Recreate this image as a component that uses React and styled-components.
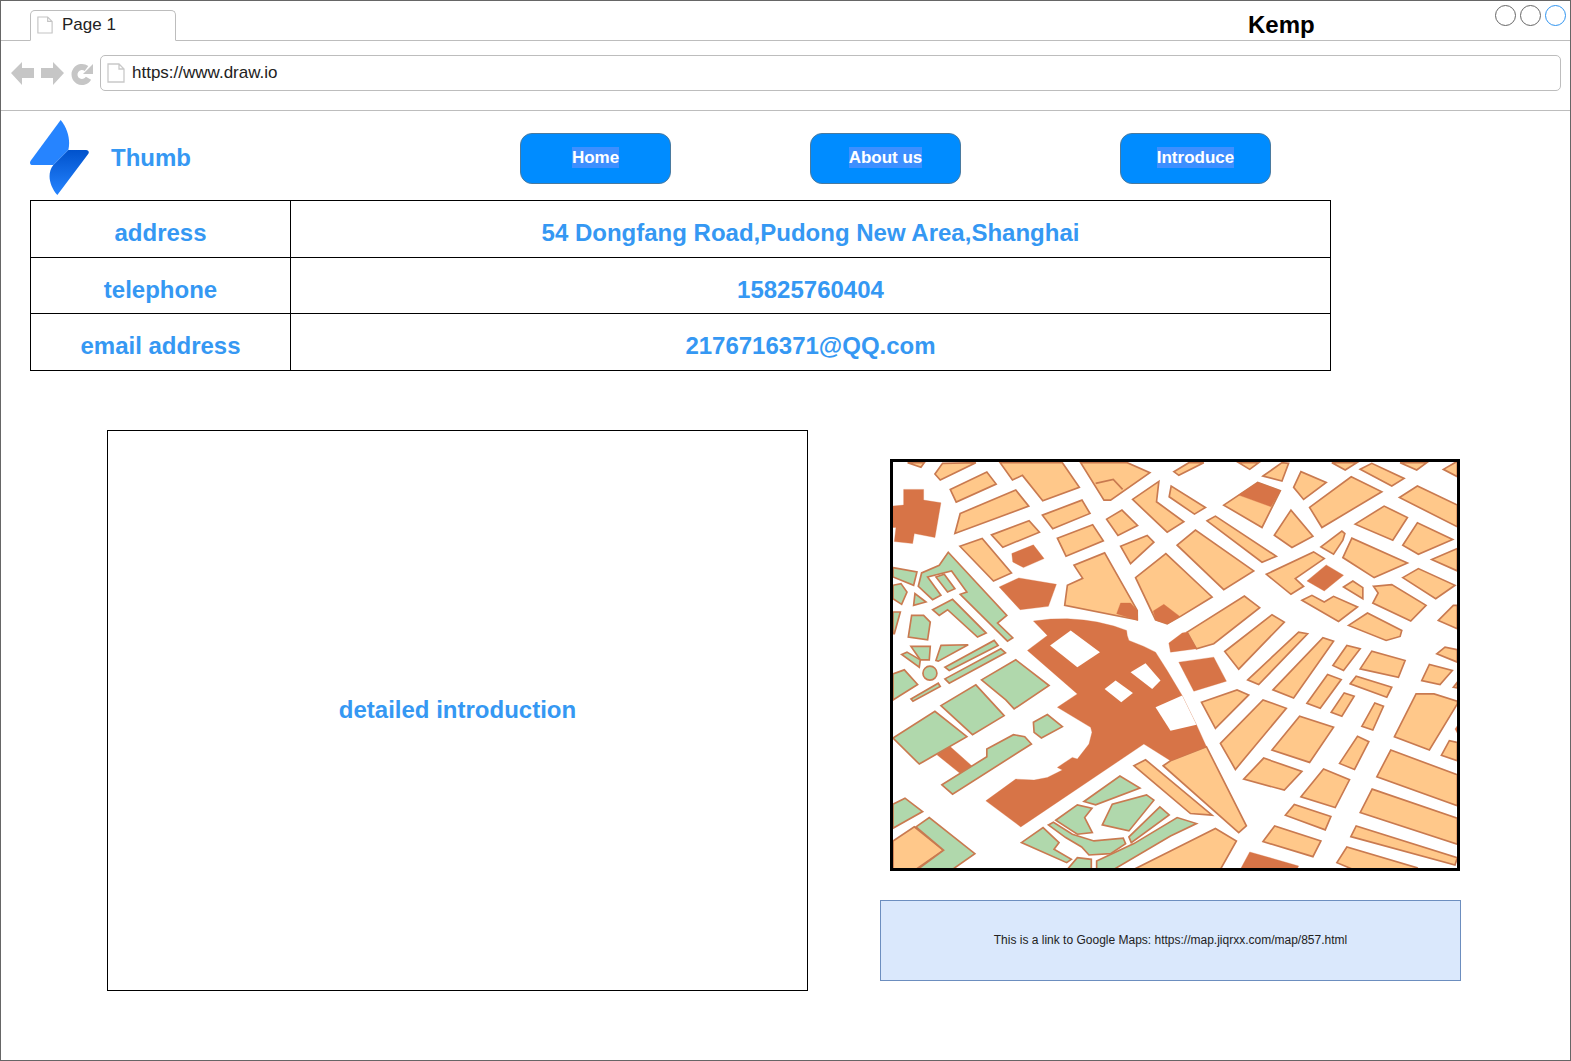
import React from 'react';
import styled, { createGlobalStyle } from 'styled-components';

const GlobalStyle = createGlobalStyle`
  html, body {
    margin: 0;
    padding: 0;
    background: #fff;
    font-family: "Liberation Sans", Arial, sans-serif;
  }
`;

const Window = styled.div`
  box-sizing: border-box;
  width: 1571px;
  height: 1061px;
  border: 1px solid #666;
  overflow: hidden;
  background: #fff;
`;

const TabStrip = styled.div`
  display: flex;
  align-items: flex-end;
  height: 40px;
  box-sizing: border-box;
  border-bottom: 1px solid #bdbdbd;
  padding-left: 29px;
  position: relative;
`;

const Tab = styled.div`
  display: flex;
  align-items: center;
  gap: 9px;
  box-sizing: border-box;
  width: 146px;
  height: 31px;
  margin-bottom: -1px;
  padding: 0 0 1px 6px;
  border: 1px solid #bdbdbd;
  border-bottom: 1px solid #fff;
  border-radius: 5px 5px 0 0;
  font-size: 17px;
  color: #222;
`;

const PageTitle = styled.div`
  margin-left: 1072px;
  margin-top: 8px;
  align-self: center;
  font-size: 24px;
  font-weight: bold;
  color: #000;
`;

const Controls = styled.div`
  position: absolute;
  top: 4px;
  right: 4px;
  display: flex;
  gap: 4px;
`;

const Dot = styled.span`
  box-sizing: border-box;
  width: 21px;
  height: 21px;
  border-radius: 50%;
  border: 1px solid ${p => p.$active ? '#2f94f0' : '#666'};
`;

const Toolbar = styled.div`
  display: flex;
  align-items: center;
  box-sizing: border-box;
  height: 70px;
  border-bottom: 1px solid #bdbdbd;
  padding: 0 9px 5px 10px;
`;

const NavIcons = styled.svg`
  width: 84px;
  height: 26px;
  flex: none;
  margin-right: 5px;
  margin-top: 2px;
`;

const AddressBar = styled.div`
  flex: 1;
  display: flex;
  align-items: center;
  gap: 7px;
  box-sizing: border-box;
  height: 36px;
  padding-left: 6px;
  border: 1px solid #bdbdbd;
  border-radius: 5px;
  font-size: 17px;
  color: #222;
`;

const Header = styled.div`
  display: flex;
  align-items: center;
  height: 89px;
  padding-left: 29px;
`;

const Logo = styled.svg`
  width: 59px;
  height: 75px;
  flex: none;
  margin-top: 4px;
`;

const Brand = styled.div`
  margin-left: 22px;
  margin-top: 4px;
  width: 409px;
  font-size: 24px;
  font-weight: bold;
  color: #3598f3;
`;

const NavButton = styled.div`
  display: flex;
  align-items: center;
  justify-content: center;
  box-sizing: border-box;
  width: 151px;
  height: 51px;
  margin-left: ${p => p.$gap}px;
  margin-top: 5px;
  padding-bottom: 2px;
  border: 1px solid #4a7a9f;
  border-radius: 12px;
  background: #008cff;
`;

const ButtonLabel = styled.span`
  font-size: 17px;
  line-height: 21px;
  font-weight: bold;
  color: #fff;
  background: #3d8fff;
`;

const InfoTable = styled.table`
  border-collapse: collapse;
  table-layout: fixed;
  width: 1301px;
  margin-left: 29px;
`;

const InfoRow = styled.tr`
  height: ${p => p.$height}px;
`;

const InfoCell = styled.td`
  padding: 8px 0 0;
  border: 1px solid #000;
  text-align: center;
  font-size: 24px;
  font-weight: bold;
  color: #3598f3;
  width: ${p => p.$width ? `${p.$width}px` : 'auto'};
`;

const Content = styled.div`
  display: flex;
  align-items: flex-start;
  padding-left: 106px;
  margin-top: 59px;
`;

const DetailBox = styled.div`
  display: flex;
  align-items: center;
  justify-content: center;
  box-sizing: border-box;
  width: 701px;
  height: 561px;
  padding-bottom: 2px;
  border: 1px solid #000;
  font-size: 24px;
  font-weight: bold;
  color: #3598f3;
`;

const Side = styled.div`
  display: flex;
  flex-direction: column;
  align-items: flex-start;
  gap: 29px;
  margin-left: 72px;
  padding-top: 29px;
`;

const MapFrame = styled.div`
  box-sizing: border-box;
  width: 570px;
  height: 412px;
  margin-left: 10px;
  border: 3px solid #000;
  background: #fff;
`;

const MapSvg = styled.svg`
  display: block;
  width: 564px;
  height: 406px;
`;

const LinkBox = styled.div`
  display: flex;
  align-items: center;
  justify-content: center;
  box-sizing: border-box;
  width: 581px;
  height: 81px;
  padding-bottom: 2px;
  border: 1px solid #6c8ebf;
  background: #dae8fc;
  font-size: 12px;
  color: #222;
`;

function PageIcon({ width, height, stroke }) {
  return (
    <svg width={width} height={height} viewBox="0 0 18 20" style={{ flex: 'none' }}>
      <path d="M1 1 H12 L17 6 V19 H1 Z M12 1 V6 H17" fill="#fff" stroke={stroke} strokeWidth="1.3" />
    </svg>
  );
}

// map blocks, coordinates read from 3x crops: one list per quadrant
const quadA = {
  tan: [
    '80,38 130,38 120,52', '162,72 185,40 285,38 178,90', '208,118 318,66 346,102 226,156',
    '238,190 405,120 444,168 222,250', '485,195 604,150 628,190 516,236', '332,254 445,212 476,246 366,291',
    '530,264 636,224 668,272 556,318', '237,288 304,265 392,368 338,392', '358,38 545,38 596,112 486,152 425,76 395,90',
    '600,38 740,38 808,68 690,150 670,150', '678,207 724,180 771,226 712,256', '720,288 800,256 820,276 750,340',
    '756,148 835,94 828,155 910,215 860,246', '866,140 872,108 975,172 942,192',
    '552,465 560,405 606,384 580,345 672,308 770,480 770,508', '765,382 856,310 995,440 900,498 860,520 825,508',
  ],
  line: ['645,100 698,88 726,118'],
  dark: [
    '68,118 128,118 128,150 180,158 162,262 100,250 95,280 40,274 45,232 36,232 36,168 68,165',
    '393,310 458,284 490,325 428,352 396,335', '355,410 414,383 527,402 503,468 418,478',
    '708,490 720,458 750,458 770,480 772,510', '818,482 850,462 898,498 862,520 826,510',
  ],
  green: [
    '36,352 108,365 98,405 36,380', '36,405 60,400 78,425 62,462 36,445',
    '112,408 122,368 175,345 202,306 378,495 350,518 396,562 380,572 238,432 258,425 212,362 140,380 180,435 155,448',
    '165,380 190,372 222,415 200,425', '155,478 215,447 316,548 290,560 200,478 175,495',
    '98,465 102,430 135,455', '36,485 58,485 40,550 36,550', '92,495 128,495 148,515 140,568 82,560',
    '90,588 148,588 145,628 118,628', '180,585 262,583 172,632 165,630', '62,612 78,605 118,628 115,650',
    '192,650 340,570 352,585 205,660', '192,685 360,595 374,607 205,698',
  ],
};

const quadB = {
  tan: [
    '10,65 55,38 100,38 25,76', '205,38 265,38 238,58', '278,78 335,38 355,40 335,93', '370,112 392,65 468,97 400,148',
    '418,172 543,80 635,125 455,232', '485,38 560,38 525,60', '570,58 605,40 702,85 665,108', '690,38 770,38 740,60',
    '820,58 860,35 862,35 862,80', '688,142 742,108 862,165 862,230', '555,222 642,168 712,202 668,270',
    '698,285 742,218 848,268 745,312', '785,328 862,295 862,362',
    '160,165 205,135 262,97 330,122 275,232', '110,212 135,198 318,318 275,336', '312,255 362,180 428,258 365,292',
    '20,285 75,240 250,362 160,418', '452,290 515,243 524,250 518,270 490,312', '518,322 545,264 712,338 612,382',
    '288,372 430,305 462,325 375,385 400,408 362,432', '520,410 548,392 578,412 578,445',
    '698,382 745,355 855,405 797,445', '610,408 665,403 768,465 722,512 608,458 624,428',
    '395,450 425,435 462,455 490,438 562,470 505,513', '535,525 592,488 695,540 690,558 648,570',
    '805,510 850,465 862,465 862,535', '50,545 222,437 268,472 130,580 78,595',
    '163,603 305,493 342,515 205,656', '232,688 385,545 412,550 265,702', '308,718 458,562 490,572 370,742',
    '488,645 530,585 570,595 520,660', '570,655 605,602 705,630 685,680', '800,610 825,590 862,598 862,635',
  ],
  dark: [
    '205,135 262,97 330,122 302,170', '410,392 468,344 520,375 462,422',
    '35,548 50,545 78,595 0,605 -5,578', '25,635 130,620 168,692 70,722',
  ],
};

const quadC = {
  darkUnder: ['168,282 205,255 278,320 240,340'],
  tan: [
    '36,540 100,498 188,568 105,625 36,625', '760,315 795,297 995,463 930,458',
    '848,315 870,300 978,258 1098,495 1075,515', '760,625 870,570 1005,503 1068,540 1020,625',
  ],
  green: [
    '36,40 70,28 110,72 36,118', '90,115 172,68 178,78 96,122', '302,58 405,-2 505,75 400,145 375,118',
    '180,135 285,73 370,165 275,222', '36,232 162,152 258,228 115,310', '458,185 500,162 545,198 482,232 460,215',
    '183,372 318,288 318,265 398,222 432,228 452,250 215,400', '36,430 72,412 125,452 36,502',
    '105,498 145,470 282,578 215,625 110,625 188,568', '610,422 718,346 778,382 645,432',
    '525,478 590,432 634,442 612,470 635,515 590,520', '665,492 695,430 798,402 820,418 745,510',
    '745,528 838,438 866,462 752,545', '422,545 487,500 535,545 520,565 572,595 558,605',
    '503,492 518,484 575,520 640,540 728,532 735,548 690,578 625,582 603,558 555,530',
    '648,625 648,600 760,548 890,470 948,488 870,525 700,625', '560,625 590,590 632,595 632,625',
  ],
  holes: [
    '672,85 705,60 757,97 722,125', '750,35 795,8 840,60 815,85', '825,140 905,105 948,192 870,210',
  ],
};

const quadD = {
  tan: [
    '410,128 472,42 513,57 450,143', '483,155 522,97 552,107 515,167', '575,197 614,127 640,137 608,208',
    '755,60 778,12 847,30 810,72', '850,80 862,65 862,82', '93,125 200,88 235,103 135,203',
    '150,248 278,118 348,143 195,326', '305,268 388,167 490,200 418,305', '220,355 280,292 395,332 342,388',
    '392,408 460,325 538,357 495,440', '345,463 372,431 482,467 465,507', '278,542 313,495 452,540 428,587',
    '508,308 562,227 596,243 553,326', '673,228 738,100 792,100 862,122 862,130 778,268',
    '814,284 838,240 862,245 862,300', '620,348 662,268 862,342 862,435', '570,455 606,385 862,472 862,550',
    '542,527 558,495 862,590 855,612', '500,605 530,558 740,620 730,630 560,630',
    '540,70 558,47 665,80 650,110',
  ],
  dark: ['210,625 238,573 385,615 380,625', '855,205 862,195 862,218'],
};

// the big station block crosses all four crops, so it sits in the coordinates of crop A
const mainBlock = [
  '458,512 510,506 560,505 610,509 650,515 700,527 738,540 740,555 745,570 790,588 825,605 860,660',
  '905,735 948,822 978,888 870,930 790,880 420,1128 315,1050 405,985 460,988 500,980 545,958 530,950',
  '575,920 590,925 625,880 634,845 630,830 530,770 590,730 440,600 500,555',
].join(' ');

const TAN = { fill: '#ffc88a', stroke: '#c97a50', strokeWidth: 5 };
const GREEN = { fill: '#b0d8ac', stroke: '#c97a50', strokeWidth: 5 };
const DARK = { fill: '#d77447', stroke: '#d77447', strokeWidth: 1 };

function Blocks({ list, look }) {
  return (list || []).map(points => <polygon key={points} points={points} {...look} />);
}

function CityMap() {
  return (
    <MapSvg viewBox="36 36 1695 1215" preserveAspectRatio="none">
      <g transform="translate(0,630)">
        <Blocks list={quadC.darkUnder} look={DARK} />
      </g>
      <Blocks list={quadA.tan} look={TAN} />
      <g transform="translate(870,0)">
        <Blocks list={quadB.tan} look={TAN} />
      </g>
      <g transform="translate(870,630)">
        <Blocks list={quadD.tan} look={TAN} />
        <Blocks list={quadD.dark} look={DARK} />
      </g>
      <g transform="translate(0,630)">
        <Blocks list={quadC.tan} look={TAN} />
      </g>
      <polygon points={mainBlock} {...DARK} />
      <polygon points="508,585 570,540 658,605 590,650" fill="#fff" />
      <g transform="translate(0,630)">
        <Blocks list={quadC.holes} look={{ fill: '#fff' }} />
        <Blocks list={quadC.green} look={GREEN} />
        <circle cx="147" cy="38" r="21" {...GREEN} />
      </g>
      <Blocks list={quadA.dark} look={DARK} />
      <Blocks list={quadA.green} look={GREEN} />
      {quadA.line.map(points => <polyline key={points} points={points} fill="none" stroke="#c97a50" strokeWidth="5" />)}
      <g transform="translate(870,0)">
        <Blocks list={quadB.dark} look={DARK} />
      </g>
    </MapSvg>
  );
}

const rows = [
  { label: 'address', value: '54 Dongfang Road,Pudong New Area,Shanghai', height: 57 },
  { label: 'telephone', value: '15825760404', height: 56 },
  { label: 'email address', value: '2176716371@QQ.com', height: 57 },
];

export default function App() {
  return (
    <>
      <GlobalStyle />
      <Window>
        <TabStrip>
          <Tab>
            <PageIcon width={16} height={18} stroke="#c4c4c4" />
            Page 1
          </Tab>
          <PageTitle>Kemp</PageTitle>
          <Controls>
            <Dot />
            <Dot />
            <Dot $active />
          </Controls>
        </TabStrip>
        <Toolbar>
          <NavIcons viewBox="0 0 84 26">
            <path d="M0 12 L11 1 V7 H23 V17 H11 V24 Z" fill="#c6c6c6" />
            <path d="M53 12 L42 1 V7 H30 V17 H42 V24 Z" fill="#c6c6c6" />
            <path d="M77.5 17.2 A7.5 7.5 0 1 1 75.5 7.5" fill="none" stroke="#c6c6c6" strokeWidth="6" />
            <path d="M82 3 V13 H72 Z" fill="#c6c6c6" />
          </NavIcons>
          <AddressBar>
            <PageIcon width={18} height={20} stroke="#c9c9c9" />
            https://www.draw.io
          </AddressBar>
        </Toolbar>
        <Header>
          <Logo viewBox="90 360 177 225">
            <defs>
              <linearGradient id="lowerBlade" x1="0" y1="0" x2="0" y2="1">
                <stop offset="0" stopColor="#0052cc" />
                <stop offset="1" stopColor="#2684ff" />
              </linearGradient>
            </defs>
            <path d="M182 360 C203 385 212 420 205 450 L160 495 H98 C90 495 88 488 92 482 Z" fill="#2684ff" />
            <path d="M172 585 C148 558 140 520 160 495 L205 450 H258 C266 450 269 457 264 463 Z" fill="url(#lowerBlade)" />
          </Logo>
          <Brand>Thumb</Brand>
          <NavButton $gap={0}><ButtonLabel>Home</ButtonLabel></NavButton>
          <NavButton $gap={139}><ButtonLabel>About us</ButtonLabel></NavButton>
          <NavButton $gap={159}><ButtonLabel>Introduce</ButtonLabel></NavButton>
        </Header>
        <InfoTable>
          <tbody>
            {rows.map(row => (
              <InfoRow key={row.label} $height={row.height}>
                <InfoCell $width={259}>{row.label}</InfoCell>
                <InfoCell>{row.value}</InfoCell>
              </InfoRow>
            ))}
          </tbody>
        </InfoTable>
        <Content>
          <DetailBox>detailed introduction</DetailBox>
          <Side>
            <MapFrame>
              <CityMap />
            </MapFrame>
            <LinkBox>This is a link to Google Maps: https://map.jiqrxx.com/map/857.html</LinkBox>
          </Side>
        </Content>
      </Window>
    </>
  );
}
